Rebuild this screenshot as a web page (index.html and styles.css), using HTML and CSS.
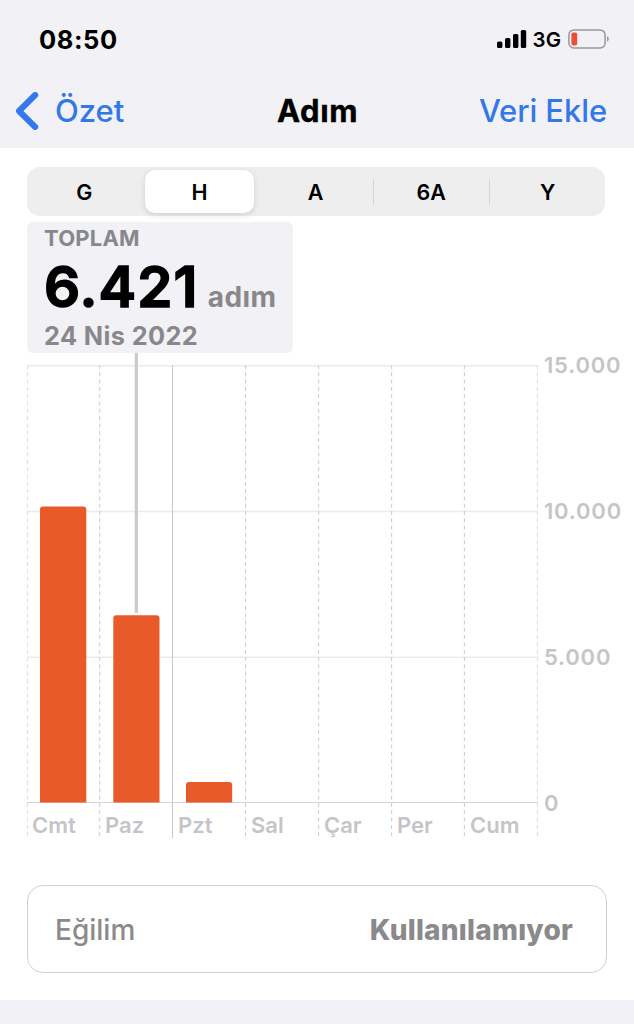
FILE: index.html
```html
<!DOCTYPE html>
<html lang="tr">
<head>
<meta charset="utf-8">
<meta name="viewport" content="width=device-width, initial-scale=1">
<title>Adım</title>
<link rel="stylesheet" href="styles.css">
</head>
<body>
<header class="header">
  <div class="status">
    <span class="time">08:50</span>
    <div class="indicators">
      <svg class="signal" width="30" height="18" viewBox="0 0 30 18">
        <rect x="0" y="11.4" width="5.4" height="6.6" rx="1.6"/>
        <rect x="8" y="8" width="5.4" height="10" rx="1.6"/>
        <rect x="16" y="4" width="5.4" height="14" rx="1.6"/>
        <rect x="23.8" y="0" width="5.4" height="18" rx="1.6"/>
      </svg>
      <span class="network">3G</span>
      <svg class="battery" width="42" height="20" viewBox="0 0 42 20">
        <rect x="0.9" y="0.9" width="36.2" height="18" rx="5" fill="none" stroke="#99999c" stroke-width="1.5"/>
        <rect x="3.4" y="3.4" width="5.8" height="13" rx="2" fill="#eb4d3d"/>
        <path d="M39 7.2C41.4 8 41.4 11.8 39 12.6Z" fill="#99999c"/>
      </svg>
    </div>
  </div>
  <nav class="nav">
    <a class="back"><svg width="24" height="38" viewBox="0 0 24 38"><path d="M20.2 3L4 19L20.2 35" fill="none" stroke="#3478ee" stroke-width="6" stroke-linecap="round" stroke-linejoin="round"/></svg><span class="back-label">Özet</span></a>
    <h1 class="title">Adım</h1>
    <a class="add">Veri Ekle</a>
  </nav>
</header>
<main class="main">
  <div class="segments">
    <span class="segment">G</span>
    <span class="segment active">H</span>
    <span class="segment">A</span>
    <span class="segment divided">6A</span>
    <span class="segment divided">Y</span>
  </div>
  <section class="summary">
    <div class="summary-label">TOPLAM</div>
    <div class="summary-value"><span class="number">6.421</span><span class="unit">adım</span></div>
    <div class="summary-date">24 Nis 2022</div>
  </section>
  <section class="chart">
    <div class="plot">
      <svg class="grid" width="512" height="473" viewBox="0 0 512 473">
        <g stroke="#ebebec" stroke-width="1.4">
          <path d="M0 .7H511M0 146.5H511M0 292.3H511"/>
        </g>
        <path d="M0 437.5H511" stroke="#d2d2d3" stroke-width="1.2"/>
        <g stroke="#cfcfd1" stroke-width="1.1" stroke-dasharray="4 3.3">
          <path d="M72.7 0V473M218.6 0V473M291.6 0V473M364.6 0V473M437.4 0V473"/>
          <path d="M.6 0V473M510.4 0V473" stroke="#e0e0e2"/>
        </g>
        <path d="M145.5 0V473" stroke="#cacacc" stroke-width="1.1"/>
        <path d="M109.3 -12V248" stroke="#cbcbcd" stroke-width="3.2"/>
        <g fill="#e95a2b">
          <path d="M13 437.5V144.5Q13 141.5 16 141.5H56.300Q59.300 141.500 59.300 144.500V437.500Z"/>
          <path d="M86.300 437.500V253.200Q86.300 250.200 89.300 250.200H129.500Q132.500 250.200 132.500 253.200V437.500Z"/>
          <path d="M159 437.500V420Q159 417 162 417H202.200Q205.200 417 205.200 420V437.500Z"/>
        </g>
      </svg>
      <div class="days">
        <span>Cmt</span><span>Paz</span><span>Pzt</span><span>Sal</span><span>Çar</span><span>Per</span><span>Cum</span>
      </div>
    </div>
    <div class="axis"><span>15.000</span><span>10.000</span><span>5.000</span><span>0</span></div>
  </section>
  <section class="trend">
    <span class="trend-label">Eğilim</span>
    <span class="trend-value">Kullanılamıyor</span>
  </section>
</main>
</body>
</html>
```
FILE: styles.css
```css
* { box-sizing: border-box; }
body {
  margin: 0;
  height: 1024px;
  overflow: hidden;
  background: #f1f1f6;
  font-family: Inter, "Liberation Sans", sans-serif;
  color: #000;
}
.header { height: 148px; background: #f1f1f6; }
.status {
  display: flex;
  justify-content: space-between;
  align-items: center;
  height: 78px;
  padding: 0 24px 0 39px;
}
.time { font-size: 25.5px; font-weight: 700; letter-spacing: .6px; }
.indicators { display: flex; align-items: center; }
.network { font-size: 20.5px; font-weight: 600; margin: 0 7px 0 6px; }
.nav {
  display: grid;
  grid-template-columns: 262px auto 1fr;
  align-items: center;
  height: 64px;
  padding: 1px 27px 0 15px;
  font-size: 31px;
  line-height: 40px;
  color: #3478e8;
  white-space: nowrap;
}
.back { display: flex; align-items: center; gap: 16px; font-weight: 500; }
.title {
  margin: 0;
  font-size: 31px;
  font-weight: 700;
  color: #000;
  letter-spacing: .6px;
  -webkit-text-stroke: .4px #000;
}
.add { justify-self: end; font-weight: 500; letter-spacing: -.1px; }
.main { height: 852px; padding: 19px 0 0 27px; background: #fff; }
.segments {
  display: grid;
  grid-template-columns: repeat(5, 1fr);
  width: 578px;
  height: 49px;
  padding: 3px 0;
  border-radius: 13px;
  background: #eee;
}
.segment {
  display: flex;
  align-items: center;
  justify-content: center;
  padding: 0 1px 0 0;
  font-size: 21.5px;
  font-weight: 600;
}
.active {
  margin: 0 4px 0 2px;
  padding-right: 0;
  border-radius: 10px;
  background: #fff;
  box-shadow: 0 2px 6px rgba(0, 0, 0, .13);
}
.divided {
  background: linear-gradient(#d5d5d7, #d5d5d7) left center / 1px 26px no-repeat;
}
.divided:nth-child(4) { margin-left: -1px; padding-right: 0; }
.divided:last-child { padding: 0 0 0 1px; }
.summary {
  width: 266px;
  height: 131px;
  margin-top: 6px;
  padding: 3px 0 0 17px;
  border-radius: 6px;
  background: #f1f1f6;
  color: #88888c;
  font-weight: 700;
  white-space: nowrap;
}
.summary-label { font-size: 22px; line-height: 27px; letter-spacing: .2px; }
.summary-value { display: flex; align-items: baseline; gap: 9px; height: 68px; line-height: 69px; }
.number {
  font-size: 56.5px;
  font-weight: 600;
  color: #000;
  letter-spacing: 1.1px;
  -webkit-text-stroke: 1.6px #000;
  stroke-linejoin: round;
}
.unit { font-size: 28px; letter-spacing: .5px; }
.summary-date { font-size: 25.3px; line-height: 31px; letter-spacing: .4px; }
.chart { display: flex; margin-top: 12px; height: 473px; }
.plot { display: grid; width: 512px; }
.grid { grid-area: 1 / 1; overflow: visible; }
.days {
  grid-area: 1 / 1;
  align-self: end;
  display: grid;
  grid-template-columns: repeat(7, 73px);
  height: 35px;
  padding-left: 5px;
}
.days, .axis { font-size: 22px; font-weight: 600; color: #c5c5c7; }
.days { line-height: 44px; letter-spacing: 0; }
.axis {
  display: flex;
  flex-direction: column;
  gap: 116px;
  margin: -15px 0 0 5px;
  line-height: 30px;
  letter-spacing: .8px;
}
.trend {
  display: flex;
  justify-content: space-between;
  align-items: center;
  width: 580px;
  height: 88px;
  margin-top: 47px;
  padding: 1px 33px 0 27px;
  border: 1.5px solid #d1d1d3;
  border-radius: 16px;
  font-size: 28px;
  color: #8a8a8c;
}
.trend-label { font-weight: 500; }
.trend-value { font-weight: 800; letter-spacing: .25px; }
```
